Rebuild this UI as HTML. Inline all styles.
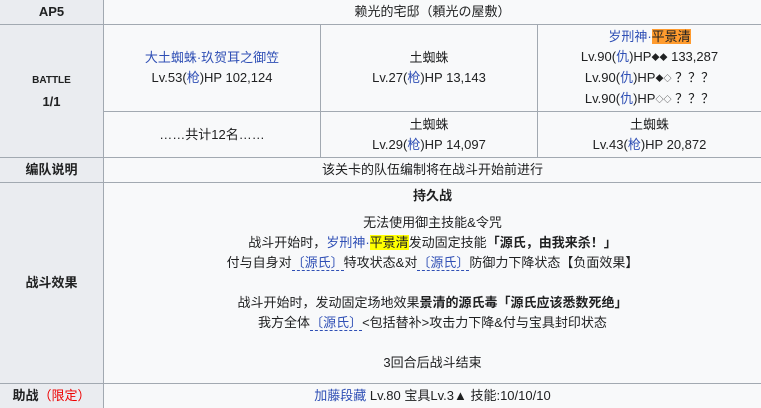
<!DOCTYPE html>
<html><head><meta charset="utf-8"><style>
*{margin:0;padding:0;box-sizing:border-box}
body{width:761px;height:408px;background:#f8f9fa;font-family:"Liberation Sans","Noto Sans CJK SC",sans-serif;font-size:13px;color:#202122;position:relative;overflow:hidden}
.c{position:absolute;display:flex;flex-direction:column;align-items:center;justify-content:center;text-align:center;line-height:20px}
.h{background:#eaecf0;font-weight:bold}
.l{position:absolute;background:#a2a9b1}
a{color:#2f4fb5;text-decoration:none}
.u{color:#2f4fb5;border-bottom:1px dashed #2f4fb5}
.o{background:#ff9b2e}
.y{background:#ffff00}
.d{font-size:8px;vertical-align:1px}
b{font-weight:bold}
</style></head><body>
<div class="c h" style="left:0;top:0;width:103px;height:24px">AP5</div>
<div class="c h" style="left:0;top:25px;width:103px;height:132px;line-height:21px"><span style="font-size:10px">BATTLE</span><span>1/1</span></div>
<div class="c h" style="left:0;top:158px;width:103px;height:24px">编队说明</div>
<div class="c h" style="left:0;top:183px;width:103px;height:200px">战斗效果</div>
<div class="c h" style="left:0;top:384px;width:103px;height:24px;display:block;padding-top:2px">助战<span style="color:#e00;font-weight:normal">（限定）</span></div>

<div class="c" style="left:104px;top:0;width:657px;height:24px">赖光的宅邸（頼光の屋敷）</div>
<div class="c" style="left:104px;top:25px;width:216px;height:86px"><a>大土蜘蛛·玖贺耳之御笠</a><span>Lv.53(<a>枪</a>)HP 102,124</span></div>
<div class="c" style="left:321px;top:25px;width:216px;height:86px"><span>土蜘蛛</span><span>Lv.27(<a>枪</a>)HP 13,143</span></div>
<div class="c" style="left:538px;top:25px;width:223px;height:86px"><span><a>岁刑神·</a><a class="o" style="color:#202122">平景清</a></span><span>Lv.90(<a>仇</a>)HP<span class="d">◆◆</span> 133,287</span><span>Lv.90(<a>仇</a>)HP<span class="d">◆◇</span> ？？？</span><span>Lv.90(<a>仇</a>)HP<span class="d">◇◇</span> ？？？</span></div>
<div class="c" style="left:104px;top:112px;width:216px;height:45px">……共计12名……</div>
<div class="c" style="left:321px;top:112px;width:216px;height:45px"><span>土蜘蛛</span><span>Lv.29(<a>枪</a>)HP 14,097</span></div>
<div class="c" style="left:538px;top:112px;width:223px;height:45px"><span>土蜘蛛</span><span>Lv.43(<a>枪</a>)HP 20,872</span></div>
<div class="c" style="left:104px;top:158px;width:657px;height:24px">该关卡的队伍编制将在战斗开始前进行</div>
<div class="c" style="left:104px;top:186px;width:657px;height:196px;justify-content:flex-start">
<b>持久战</b><div style="height:7px"></div>
<span>无法使用御主技能&amp;令咒</span>
<span>战斗开始时，<a>岁刑神·</a><span class="y">平景清</span>发动固定技能<b>「源氏，由我来杀！」</b></span>
<span>付与自身对<span class="u">〔源氏〕</span>特攻状态&amp;对<span class="u">〔源氏〕</span>防御力下降状态【负面效果】</span>
<span>&nbsp;</span>
<span>战斗开始时，发动固定场地效果<b>景清的源氏毒「源氏应该悉数死绝」</b></span>
<span>我方全体<span class="u">〔源氏〕</span>&lt;包括替补&gt;攻击力下降&amp;付与宝具封印状态</span>
<span>&nbsp;</span>
<span>3回合后战斗结束</span>
</div>
<div class="c" style="left:104px;top:384px;width:657px;height:24px"><span><a>加藤段藏</a> Lv.80 宝具Lv.3▲ 技能:10/10/10</span></div>

<div class="l" style="left:103px;top:0;width:1px;height:408px"></div>
<div class="l" style="left:0;top:24px;width:761px;height:1px"></div>
<div class="l" style="left:104px;top:111px;width:657px;height:1px"></div>
<div class="l" style="left:0;top:157px;width:761px;height:1px"></div>
<div class="l" style="left:0;top:182px;width:761px;height:1px"></div>
<div class="l" style="left:0;top:383px;width:761px;height:1px"></div>
<div class="l" style="left:320px;top:24px;width:1px;height:133px"></div>
<div class="l" style="left:537px;top:24px;width:1px;height:133px"></div>
</body></html>
